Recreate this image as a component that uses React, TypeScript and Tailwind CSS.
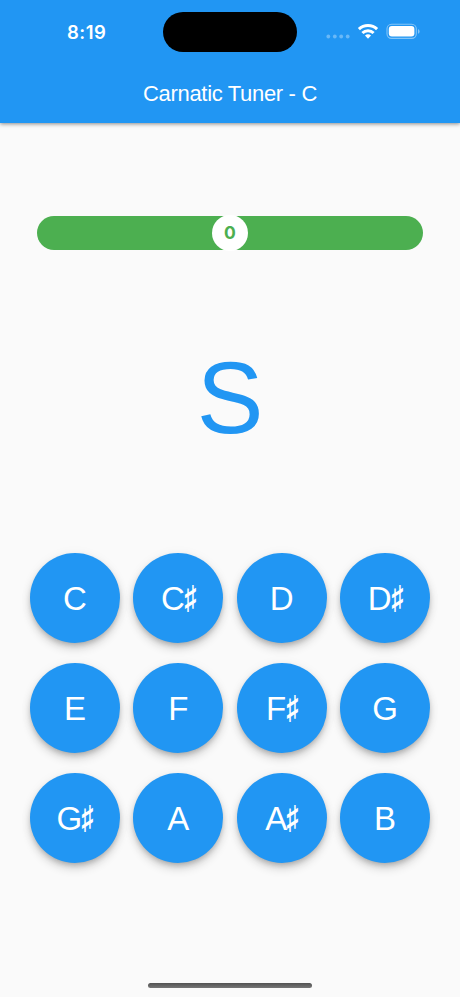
const notes = ['C', 'C♯', 'D', 'D♯', 'E', 'F', 'F♯', 'G', 'G♯', 'A', 'A♯', 'B'];

function NoteButton({ note }: { note: string }) {
  const sharp = note.length > 1;
  return (
    <button className="flex size-[90px] items-center justify-center rounded-full bg-[#2196f3] text-[33px] leading-none text-white shadow-[0_3px_5px_-1px_rgba(0,0,0,0.2),0_6px_10px_rgba(0,0,0,0.14),0_1px_12px_rgba(0,0,0,0.05)]">
      <span>{note[0]}</span>
      {sharp && (
        <span className="flex w-[11px] justify-center">
          <span className="inline-block origin-center scale-x-[0.7] font-['Liberation_Serif',serif] text-[33px] font-bold">♯</span>
        </span>
      )}
    </button>
  );
}

export default function App() {
  return (
    <div className="flex h-[997px] w-[460px] flex-col overflow-hidden bg-[#fafafa] font-['Liberation_Sans',Arial,sans-serif]">
      <header className="h-[123px] shrink-0 bg-[#2196f3] shadow-[0_1px_4px_rgba(0,0,0,0.45)]">
        <div className="flex h-[64px] pt-3">
          <div className="w-[163px] pt-[6px] pl-[67px] font-['Inter',sans-serif] text-[18.5px] leading-7 font-semibold tracking-[0.5px] text-white">8:19</div>
          <div className="h-10 w-[134px] rounded-full bg-black" />
          <svg className="ml-[29px] h-10 w-24" viewBox="326 12 96 40" fill="none">
            <g fill="#69b8f7">
              <circle cx="328.3" cy="36.5" r="1.9" />
              <circle cx="334.8" cy="36.5" r="1.9" />
              <circle cx="341.2" cy="36.5" r="1.9" />
              <circle cx="347.7" cy="36.5" r="1.9" />
            </g>
            <g stroke="white" strokeWidth="3">
              <path d="M358.9 29.1a13 13 0 0 1 18.2 0" />
              <path d="M362.4 33a7.9 7.9 0 0 1 11.2 0" />
            </g>
            <path d="M368 38.7l-3-3.1a4.2 4.2 0 0 1 6 0z" fill="white" />
            <rect x="387" y="24.2" width="29.3" height="14.2" rx="4.6" stroke="#83c5f8" strokeWidth="1.1" />
            <rect x="388.8" y="26" width="25.6" height="10.6" rx="3" fill="white" />
            <path d="M418 29v4.8q1.6-.7 1.6-2.4T418 29z" fill="#83c5f8" />
          </svg>
        </div>
        <h1 className="pt-[16px] text-center text-[22px] leading-7 tracking-[-0.32px] text-white">Carnatic Tuner - C</h1>
      </header>
      <main className="flex flex-1 flex-col items-center">
        <div className="mt-[92px] flex h-[36px] w-[386px] items-center justify-center">
          <div className="flex h-[34px] w-full items-center justify-center rounded-full bg-[#4caf50]">
            <div className="flex size-9 shrink-0 items-center justify-center rounded-full bg-white pt-px font-['Inter',sans-serif] text-[17.5px] font-bold text-[#4caf50]">0</div>
          </div>
        </div>
        <div className="mt-[97px] h-[100px] text-[102px] leading-[100px] text-[#2196f3]"><span className="inline-block scale-x-[0.98]">S</span></div>
        <div className="mt-[105px] grid grid-cols-4 gap-x-[13.4px] gap-y-5">
          {notes.map((note) => (
            <NoteButton key={note} note={note} />
          ))}
        </div>
        <div className="mt-auto mb-[9px] h-[5px] w-[164px] rounded-full bg-gradient-to-b from-[#525252] to-[#777777]" />
      </main>
    </div>
  );
}
